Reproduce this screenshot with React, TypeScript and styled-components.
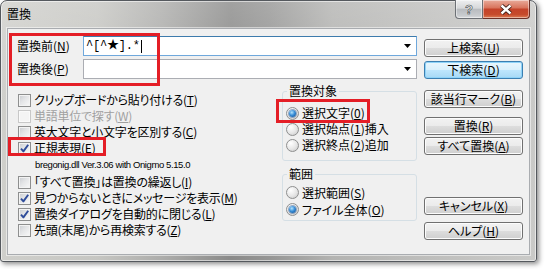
import React from 'react';
import styled, { createGlobalStyle } from 'styled-components';

const Global = createGlobalStyle`
  html, body { margin: 0; padding: 0; background: #ffffff; }
  body { font-family: "Noto Sans CJK JP", "Noto Sans", sans-serif; }
  u { text-decoration: underline; text-underline-offset: 1px; }
`;

const Stage = styled.div`
  width: 545px;
  height: 269px;
  background: #ffffff;
  overflow: hidden;
`;

const Window = styled.div`
  width: 537px;
  height: 262px;
  box-sizing: border-box;
  border: 1px solid #55595e;
  border-radius: 7px 7px 3px 3px;
  padding: 0 7px 7px 7px;
  display: flex;
  flex-direction: column;
  background:
    linear-gradient(180deg, rgba(255,255,255,0.2) 0%, rgba(255,255,255,0) 40%),
    linear-gradient(90deg, #cfcfcb 0%, #c6c6c2 18%, #adadab 30%, #8a8a89 43%, #959594 50%, #b3b3b1 62%, #bdbdbb 78%, #cacac8 100%);
  box-shadow: 2px 2px 5px rgba(0,0,0,0.45), inset 0 0 0 1px rgba(255,255,255,0.55);
`;

const TitleBar = styled.div`
  height: 28px;
  display: flex;
  justify-content: space-between;
  align-items: flex-start;
`;

const Title = styled.div`
  margin-left: -1px;
  padding-top: 6px;
  font-size: 12px;
  line-height: 14px;
  color: #000;
`;

const Caption = styled.div`
  display: flex;
  margin-top: -1px;
  margin-right: -1px;
`;

const CapButton = styled.div<{ $close?: boolean }>`
  height: 19px;
  width: ${p => (p.$close ? '47px' : '28px')};
  box-sizing: border-box;
  display: flex;
  align-items: center;
  justify-content: center;
  border: 1px solid ${p => (p.$close ? '#6b3027' : '#6d7176')};
  border-left-width: ${p => (p.$close ? '0' : '1px')};
  border-top: none;
  border-radius: ${p => (p.$close ? '0 0 4px 0' : '0 0 0 4px')};
  background: ${p =>
    p.$close
      ? 'linear-gradient(180deg, #e9ab9b 0%, #d9765f 42%, #c4432a 52%, #c64a2b 80%, #db7c55 100%)'
      : 'linear-gradient(180deg, #eeeff0 0%, #d6d8da 45%, #b9bcc0 52%, #c8cbce 85%, #d8dadc 100%)'};
  box-shadow: inset 0 0 0 1px rgba(255,255,255,0.45);
  color: #fff;
  font-family: "Liberation Sans", sans-serif;
  font-weight: bold;
  font-size: 13px;
  -webkit-text-stroke: 0.6px #3b3f44;
`;

const Client = styled.div`
  flex: 1;
  background: #f0f0f0;
  padding: 7px 6px 0 9px;
  box-shadow: 0 0 0 1px #a9acb0, 0 0 0 2px rgba(255,255,255,0.5);
  display: flex;
  gap: 7px;
  font-size: 12px;
  line-height: 14px;
  color: #000;
`;

const LeftArea = styled.div`
  width: 400px;
  display: flex;
  flex-direction: column;
`;

const FieldBlock = styled.div`
  position: relative;
  display: flex;
  flex-direction: column;
  gap: 3px;
`;

const FieldRow = styled.div`
  height: 20px;
  display: flex;
  align-items: center;
`;

const Label = styled.div`
  width: 66px;
  font-feature-settings: "palt";
`;

const Combo = styled.div<{ $focused?: boolean }>`
  width: 334px;
  height: 20px;
  box-sizing: border-box;
  border: 1px solid ${p => (p.$focused ? '#6fa8dc' : '#abadb3')};
  border-top-color: ${p => (p.$focused ? '#3d7bad' : '#abadb3')};
  background: #fff;
  display: flex;
  align-items: center;
  padding-left: 2px;
`;

const ComboText = styled.span`
  font-family: "Liberation Mono", "Noto Sans CJK JP", monospace;
  font-size: 12px;
  letter-spacing: -0.2px;
`;

const Caret = styled.span`
  width: 1px;
  height: 13px;
  background: #000;
  margin-left: 1px;
`;

const ComboArrow = styled.span`
  margin-left: auto;
  width: 17px;
  height: 18px;
  display: flex;
  align-items: center;
  justify-content: center;
`;

const Lower = styled.div`
  margin-top: 5px;
  display: flex;
`;

const CheckList = styled.div`
  width: 264px;
  padding-top: 8px;
  padding-left: 1px;
  display: flex;
  flex-direction: column;
`;

const CheckRow = styled.div<{ $disabled?: boolean }>`
  position: relative;
  height: 16px;
  display: flex;
  align-items: center;
  gap: 3px;
  white-space: nowrap;
  font-feature-settings: "palt";
  letter-spacing: -0.25px;
  color: ${p => (p.$disabled ? '#a0a0a0' : '#000')};
`;

const Info = styled.div`
  height: 18px;
  display: flex;
  align-items: center;
  padding-left: 17px;
  font-family: "Liberation Sans", sans-serif;
  font-size: 9.5px;
  letter-spacing: -0.4px;
  white-space: nowrap;
`;

const Box = styled.span<{ $disabled?: boolean }>`
  width: 13px;
  height: 13px;
  flex: none;
  box-sizing: border-box;
  border: 1px solid ${p => (p.$disabled ? '#c8c8c8' : '#8e8f8f')};
  background: ${p =>
    p.$disabled
      ? '#f4f4f4'
      : 'linear-gradient(135deg, #c9ccd0 0%, #e4e5e7 45%, #f9f9f9 100%)'};
  box-shadow: inset 0 0 0 1px ${p => (p.$disabled ? '#fafafa' : '#f3f3f3')};
  display: flex;
  align-items: center;
  justify-content: center;
`;

const Groups = styled.div`
  width: 135px;
  display: flex;
  flex-direction: column;
  gap: 6px;
`;

const Group = styled.fieldset<{ $padTop: number; $padBottom: number }>`
  margin: 0;
  padding: ${p => p.$padTop}px 0 ${p => p.$padBottom}px 3px;
  border: 1px solid #d5dfe5;
  border-radius: 3px;
  display: flex;
  flex-direction: column;
`;

const Legend = styled.legend`
  margin-left: 1px;
  padding: 0 2px;
  font-size: 12px;
  line-height: 14px;
`;

const RadioRow = styled.div<{ $h: number }>`
  position: relative;
  height: ${p => p.$h}px;
  display: flex;
  align-items: center;
  gap: 3px;
  white-space: nowrap;
  font-feature-settings: "palt";
`;

const Radio = styled.span<{ $on?: boolean }>`
  width: 13px;
  height: 13px;
  flex: none;
  box-sizing: border-box;
  border-radius: 50%;
  border: 1px solid #8e8f8f;
  background: radial-gradient(circle at 35% 30%, #ffffff 0%, #e6e6e6 55%, #c4c4c4 100%);
  display: flex;
  align-items: center;
  justify-content: center;
  &::after {
    content: '';
    display: ${p => (p.$on ? 'block' : 'none')};
    width: 7px;
    height: 7px;
    border-radius: 50%;
    background: radial-gradient(circle at 40% 35%, #b4e3fc 0%, #3a8fd8 45%, #0c4b92 95%);
    box-shadow: 0 0 0 1px rgba(30, 80, 140, 0.45);
  }
`;

const Mark = styled.span<{ $t: number; $l: number; $w: number; $h: number }>`
  position: absolute;
  top: ${p => p.$t}px;
  left: ${p => p.$l}px;
  width: ${p => p.$w}px;
  height: ${p => p.$h}px;
  box-sizing: border-box;
  border: 3px solid #e41e26;
  pointer-events: none;
`;

const ButtonCol = styled.div`
  width: 99px;
  display: flex;
  flex-direction: column;
`;

const Button = styled.div<{ $mt: number; $default?: boolean }>`
  margin-top: ${p => p.$mt}px;
  height: 18px;
  box-sizing: border-box;
  border: 1px solid ${p => (p.$default ? '#3c7fb1' : '#707070')};
  border-radius: 3px;
  background: ${p =>
    p.$default
      ? 'linear-gradient(180deg, #eaf6fd 0%, #d9f0fc 50%, #bee6fd 51%, #a7d9f5 100%)'
      : 'linear-gradient(180deg, #f2f2f2 0%, #ebebeb 50%, #dddddd 51%, #cfcfcf 100%)'};
  box-shadow: inset 0 0 0 1px ${p => (p.$default ? '#8fd3f8' : '#fcfcfc')};
  display: flex;
  align-items: center;
  justify-content: center;
  white-space: nowrap;
  font-feature-settings: "palt";
`;

const Arrow = () => (
  <svg width="7" height="4" viewBox="0 0 7 4">
    <polygon points="0,0 7,0 3.5,4" fill="#000" />
  </svg>
);

const Check = () => (
  <svg width="9" height="9" viewBox="0 0 9 9">
    <path d="M1 4.6 L3.4 7.4 L8.2 0.8" stroke="#2f4c9a" strokeWidth="1.9" fill="none" strokeLinejoin="round" />
  </svg>
);

const CloseX = () => (
  <svg width="14" height="11" viewBox="0 0 14 11">
    <path d="M2.5 1.5 L11.5 9.5 M11.5 1.5 L2.5 9.5" stroke="#3a1c16" strokeWidth="4.2" />
    <path d="M2.5 1.5 L11.5 9.5 M11.5 1.5 L2.5 9.5" stroke="#ffffff" strokeWidth="2.4" />
  </svg>
);

type CheckItem = { label: React.ReactNode; checked?: boolean; disabled?: boolean; mark?: boolean };

const checks1: CheckItem[] = [
  { label: <>クリップボードから貼り付ける(<u>T</u>)</> },
  { label: <>単語単位で探す(<u>W</u>)</>, disabled: true },
  { label: <>英大文字と小文字を区別する(<u>C</u>)</> },
  { label: <>正規表現(<u>E</u>)</>, checked: true, mark: true },
];

const checks2: CheckItem[] = [
  { label: <>「すべて置換」は置換の繰返し(<u>I</u>)</> },
  { label: <>見つからないときにメッセージを表示(<u>M</u>)</>, checked: true },
  { label: <>置換ダイアログを自動的に閉じる(<u>L</u>)</>, checked: true },
  { label: <>先頭(末尾)から再検索する(<u>Z</u>)</> },
];

const CheckLine = ({ item }: { item: CheckItem }) => (
  <CheckRow $disabled={item.disabled}>
    <Box $disabled={item.disabled}>{item.checked && <Check />}</Box>
    <span>{item.label}</span>
    {item.mark && <Mark $t={-3} $l={-10} $w={98} $h={19} />}
  </CheckRow>
);

export default function App() {
  return (
    <Stage>
      <Global />
      <Window>
        <TitleBar>
          <Title>置換</Title>
          <Caption>
            <CapButton>?</CapButton>
            <CapButton $close>
              <CloseX />
            </CapButton>
          </Caption>
        </TitleBar>
        <Client>
          <LeftArea>
            <FieldBlock>
              <FieldRow>
                <Label>置換前(<u>N</u>)</Label>
                <Combo $focused>
                  <ComboText>^[^★].*</ComboText>
                  <Caret />
                  <ComboArrow>
                    <Arrow />
                  </ComboArrow>
                </Combo>
              </FieldRow>
              <FieldRow>
                <Label>置換後(<u>P</u>)</Label>
                <Combo>
                  <ComboArrow>
                    <Arrow />
                  </ComboArrow>
                </Combo>
              </FieldRow>
              <Mark $t={-3} $l={-8} $w={151} $h={53} />
            </FieldBlock>
            <Lower>
              <CheckList>
                {checks1.map((c, i) => (
                  <CheckLine key={i} item={c} />
                ))}
                <Info>bregonig.dll Ver.3.06 with Onigmo 5.15.0</Info>
                {checks2.map((c, i) => (
                  <CheckLine key={i} item={c} />
                ))}
              </CheckList>
              <Groups>
                <Group $padTop={7} $padBottom={7}>
                  <Legend>置換対象</Legend>
                  <RadioRow $h={16}>
                    <Radio $on />
                    <span>選択文字(<u>0</u>)</span>
                    <Mark $t={-6} $l={-10} $w={94} $h={24} />
                  </RadioRow>
                  <RadioRow $h={16}>
                    <Radio />
                    <span>選択始点(<u>1</u>)挿入</span>
                  </RadioRow>
                  <RadioRow $h={16}>
                    <Radio />
                    <span>選択終点(<u>2</u>)追加</span>
                  </RadioRow>
                </Group>
                <Group $padTop={3} $padBottom={2}>
                  <Legend>範囲</Legend>
                  <RadioRow $h={17}>
                    <Radio />
                    <span>選択範囲(<u>S</u>)</span>
                  </RadioRow>
                  <RadioRow $h={17}>
                    <Radio $on />
                    <span>ファイル全体(<u>O</u>)</span>
                  </RadioRow>
                </Group>
              </Groups>
            </Lower>
          </LeftArea>
          <ButtonCol>
            <Button $mt={3}>上検索(<u>U</u>)</Button>
            <Button $mt={4} $default>下検索(<u>D</u>)</Button>
            <Button $mt={11}>該当行マーク(<u>B</u>)</Button>
            <Button $mt={9}>置換(<u>R</u>)</Button>
            <Button $mt={2}>すべて置換(<u>A</u>)</Button>
            <Button $mt={42}>キャンセル(<u>X</u>)</Button>
            <Button $mt={7}>ヘルプ(<u>H</u>)</Button>
          </ButtonCol>
        </Client>
      </Window>
    </Stage>
  );
}
